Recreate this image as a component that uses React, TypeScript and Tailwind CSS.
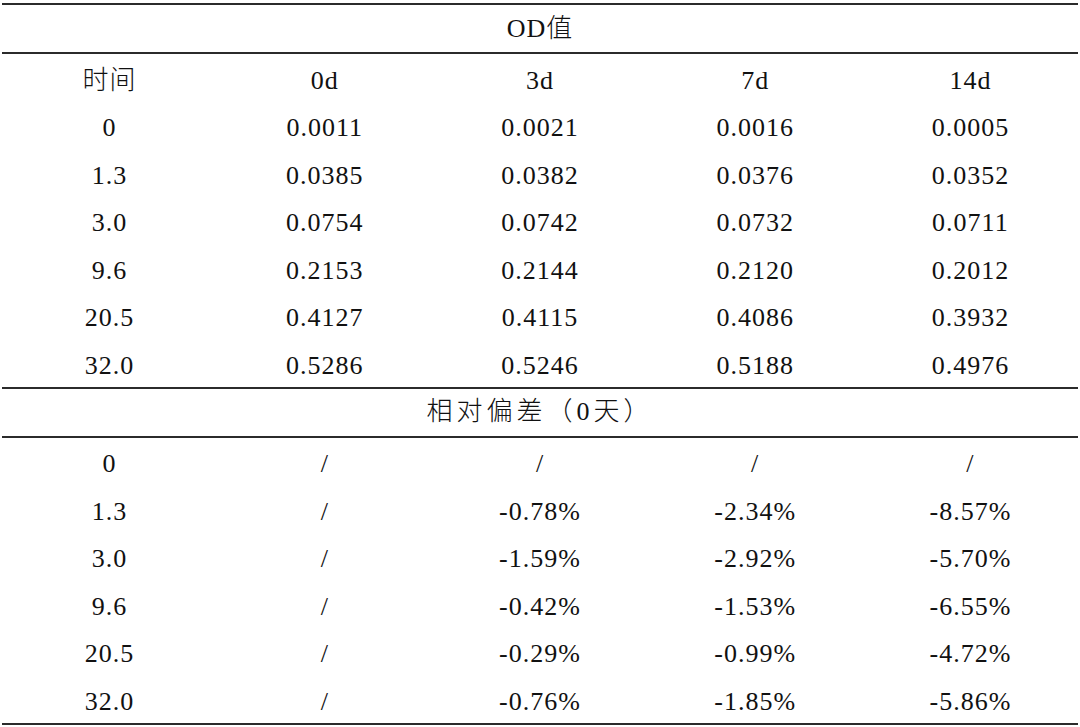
const odRows: string[][] = [
  ["0", "0.0011", "0.0021", "0.0016", "0.0005"],
  ["1.3", "0.0385", "0.0382", "0.0376", "0.0352"],
  ["3.0", "0.0754", "0.0742", "0.0732", "0.0711"],
  ["9.6", "0.2153", "0.2144", "0.2120", "0.2012"],
  ["20.5", "0.4127", "0.4115", "0.4086", "0.3932"],
  ["32.0", "0.5286", "0.5246", "0.5188", "0.4976"],
];

const deviationRows: string[][] = [
  ["0", "/", "/", "/", "/"],
  ["1.3", "/", "-0.78%", "-2.34%", "-8.57%"],
  ["3.0", "/", "-1.59%", "-2.92%", "-5.70%"],
  ["9.6", "/", "-0.42%", "-1.53%", "-6.55%"],
  ["20.5", "/", "-0.29%", "-0.99%", "-4.72%"],
  ["32.0", "/", "-0.76%", "-1.85%", "-5.86%"],
];

function Row({ cells }: { cells: string[] }) {
  return (
    <div className="grid h-[47.5px] grid-cols-5 items-center pt-[6px]">
      {cells.map((cell, i) => (
        <div key={i} className="text-center tracking-[1px]">
          {cell}
        </div>
      ))}
    </div>
  );
}

function Caption({ children, wide }: { children: React.ReactNode; wide?: boolean }) {
  return (
    <div className="flex h-[51px] items-center justify-center border-y-2 border-[#2b2b2b]">
      <span className={wide ? "tracking-[4px]" : "tracking-[1px]"}>{children}</span>
    </div>
  );
}

export default function App() {
  return (
    <div className="h-[727px] w-[1080px] bg-white pt-[3px]">
      <div
        className="ml-[2px] w-[1076px] text-[26px] font-light leading-none text-[#111]"
        style={{ fontFamily: '"Liberation Serif", "Noto Sans CJK SC", serif' }}
      >
        <Caption>OD值</Caption>
        <Row cells={["时间", "0d", "3d", "7d", "14d"]} />
        {odRows.map((r) => (
          <Row key={"od" + r[0]} cells={r} />
        ))}
        <Caption wide>相对偏差（0天）</Caption>
        {deviationRows.map((r) => (
          <Row key={"dev" + r[0]} cells={r} />
        ))}
        <div className="border-t-2 border-[#2b2b2b]" />
      </div>
    </div>
  );
}
